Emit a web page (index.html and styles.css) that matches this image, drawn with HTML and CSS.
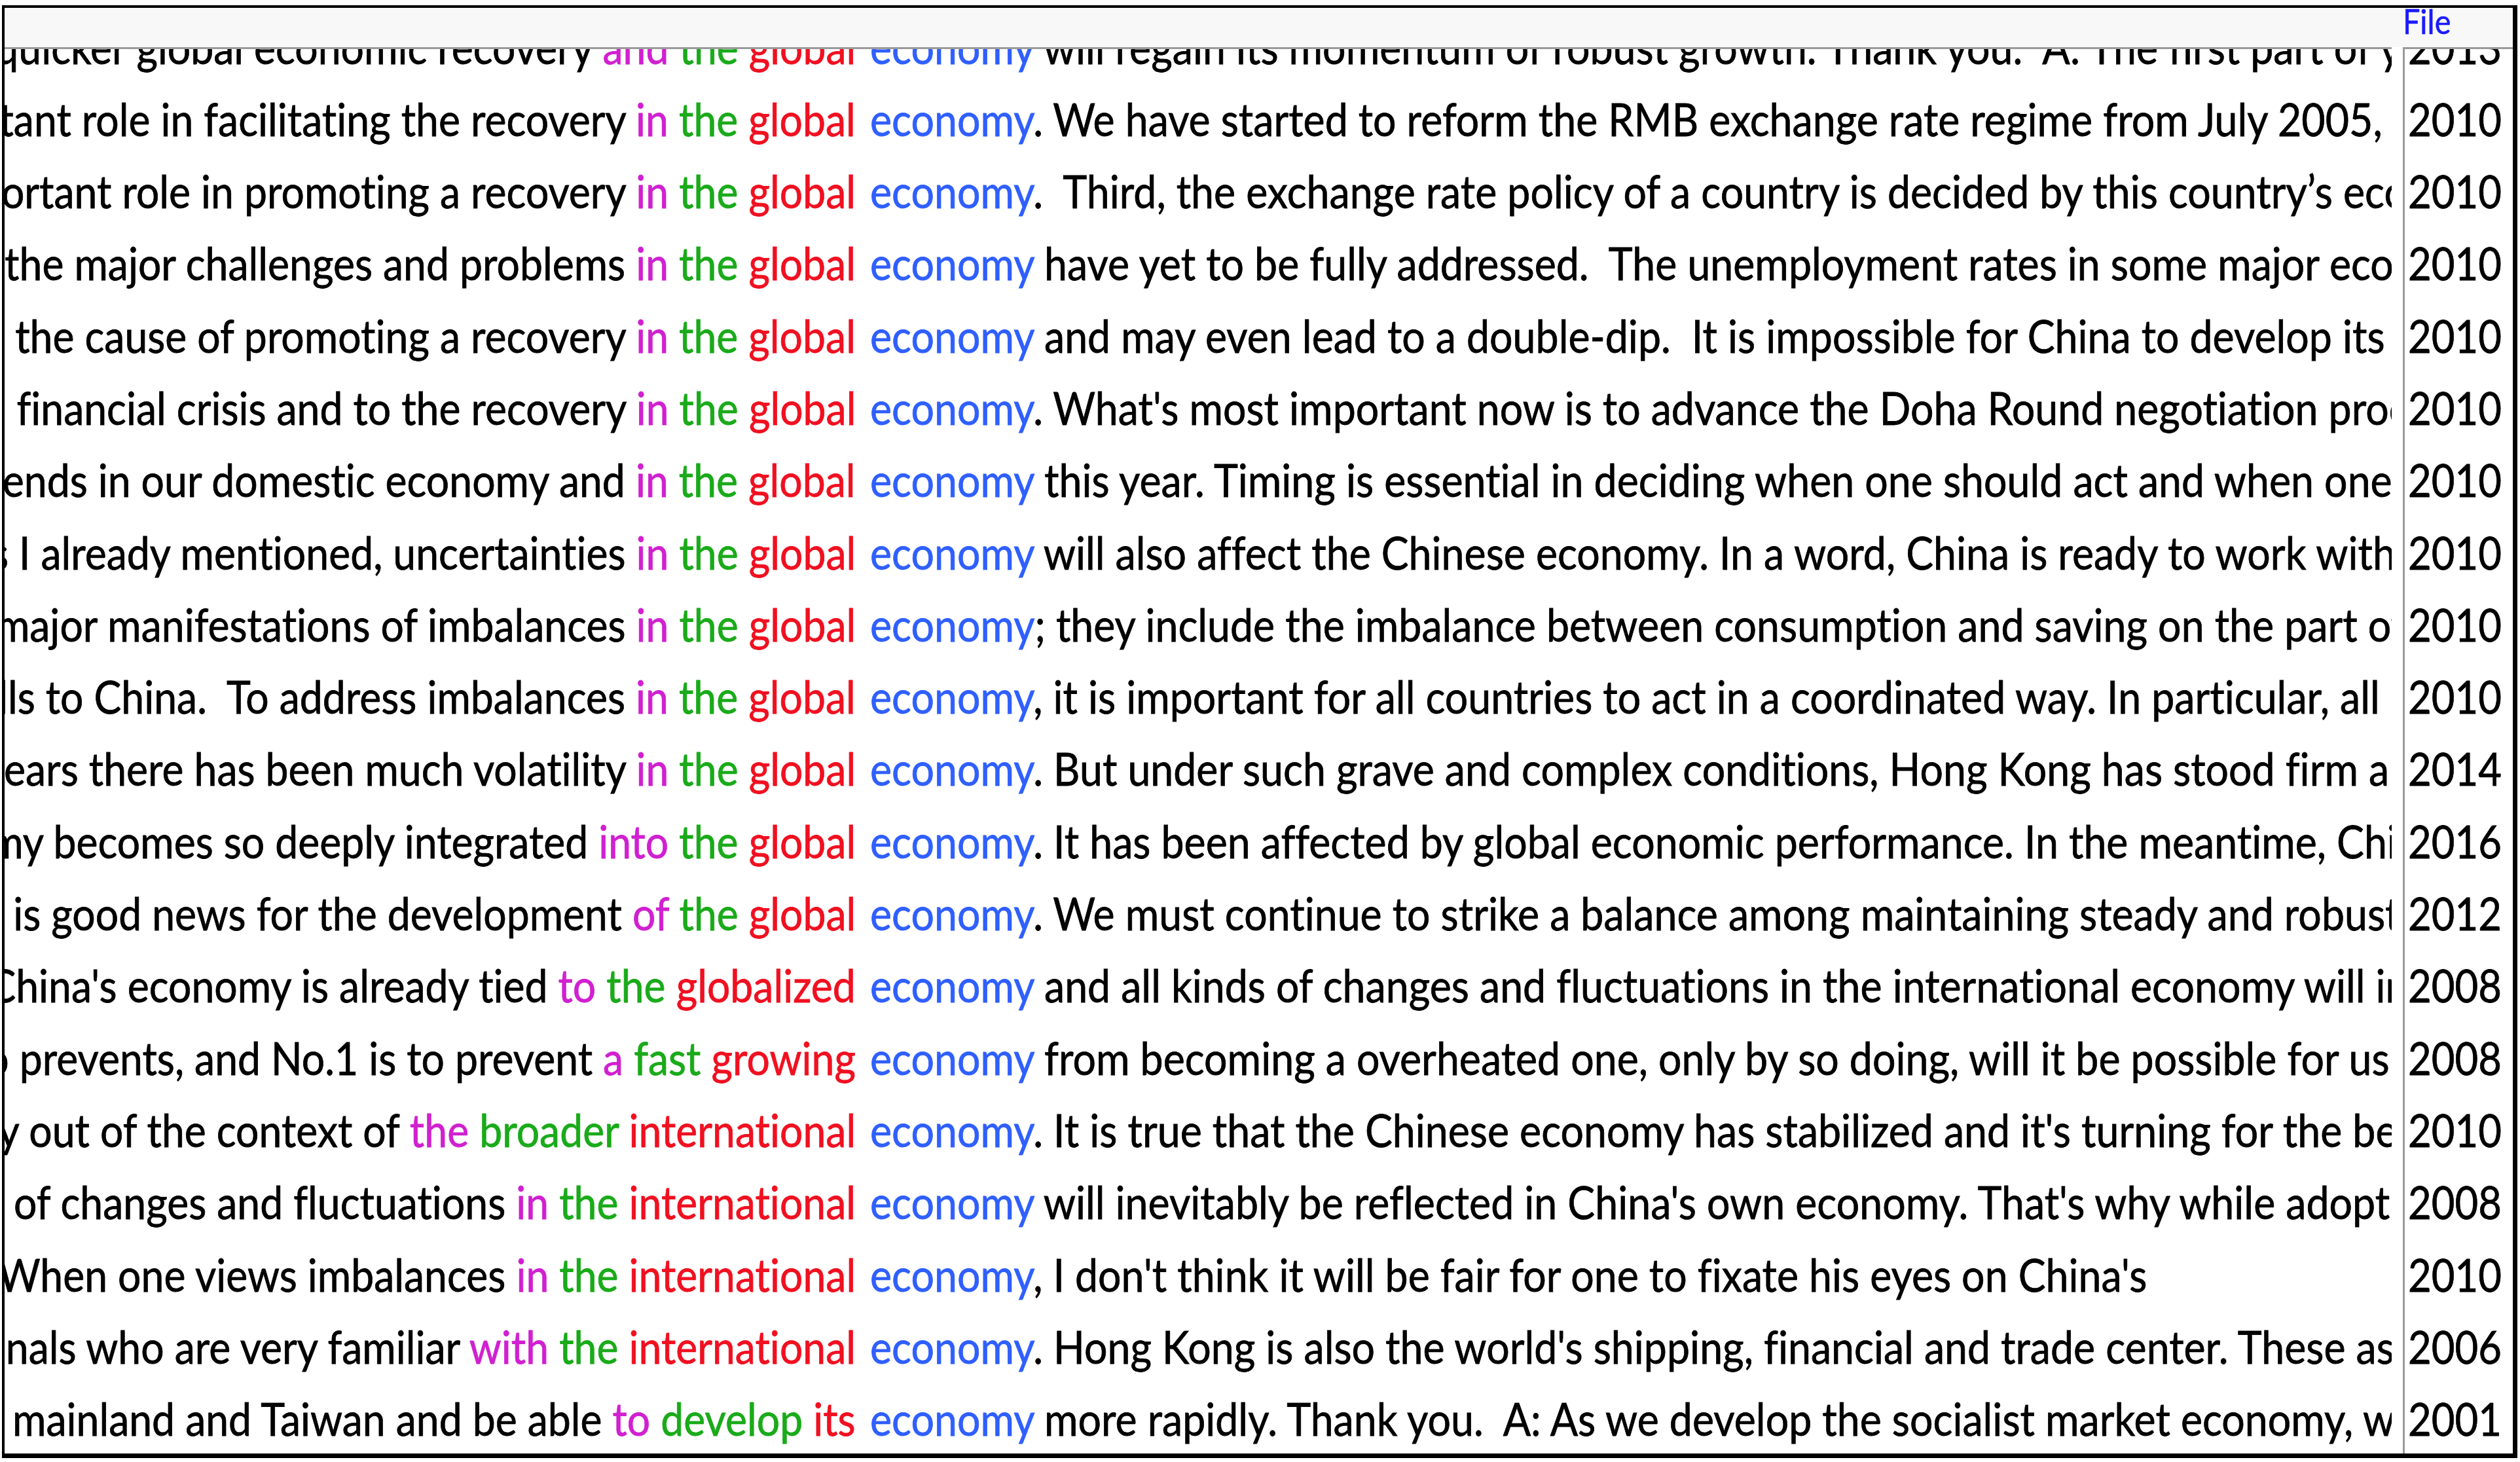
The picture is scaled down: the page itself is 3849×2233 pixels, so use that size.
FILE: index.html
```html
<!DOCTYPE html>
<html lang="en">
<head>
<meta charset="utf-8">
<title>Concordance</title>
<link rel="stylesheet" href="styles.css">
</head>
<body>
<div class="frame">
  <div class="header">
    <div class="h-conc"></div>
    <div class="h-gap"></div>
    <div class="h-file"><span class="t">File</span></div>
  </div>
  <div class="body">
    <div class="conc">
      <div class="list">
        <div class="row"><div class="lc"><span class="t">We look forward to working with all parties for a quicker global economic recovery <span class="m">and</span> <span class="g">the</span> <span class="r">global</span></span></div><div class="rc"><span class="t"><span class="kw">economy</span> will regain its momentum of robust growth. Thank you.  A: The first part of y</span></div></div>
        <div class="row"><div class="lc"><span class="t">China will continue to play an important role in facilitating the recovery <span class="m">in</span> <span class="g">the</span> <span class="r">global</span></span></div><div class="rc"><span class="t"><span class="kw">economy</span>. We have started to reform the RMB exchange rate regime from July 2005, an</span></div></div>
        <div class="row"><div class="lc"><span class="t">China will continue to play an important role in promoting a recovery <span class="m">in</span> <span class="g">the</span> <span class="r">global</span></span></div><div class="rc"><span class="t"><span class="kw">economy</span>.  Third, the exchange rate policy of a country is decided by this country’s econ</span></div></div>
        <div class="row"><div class="lc"><span class="t">We should also be aware that some of the major challenges and problems <span class="m">in</span> <span class="g">the</span> <span class="r">global</span></span></div><div class="rc"><span class="t"><span class="kw">economy</span> have yet to be fully addressed.  The unemployment rates in some major econ</span></div></div>
        <div class="row"><div class="lc"><span class="t">Protectionism would be harmful to the cause of promoting a recovery <span class="m">in</span> <span class="g">the</span> <span class="r">global</span></span></div><div class="rc"><span class="t"><span class="kw">economy</span> and may even lead to a double-dip.  It is impossible for China to develop its e</span></div></div>
        <div class="row"><div class="lc"><span class="t">We should work together to fight the international financial crisis and to the recovery <span class="m">in</span> <span class="g">the</span> <span class="r">global</span></span></div><div class="rc"><span class="t"><span class="kw">economy</span>. What's most important now is to advance the Doha Round negotiation proce</span></div></div>
        <div class="row"><div class="lc"><span class="t">We need to pay close attention to the new trends in our domestic economy and <span class="m">in</span> <span class="g">the</span> <span class="r">global</span></span></div><div class="rc"><span class="t"><span class="kw">economy</span> this year. Timing is essential in deciding when one should act and when one s</span></div></div>
        <div class="row"><div class="lc"><span class="t">economy is still facing difficulties. As I already mentioned, uncertainties <span class="m">in</span> <span class="g">the</span> <span class="r">global</span></span></div><div class="rc"><span class="t"><span class="kw">economy</span> will also affect the Chinese economy. In a word, China is ready to work with o</span></div></div>
        <div class="row"><div class="lc"><span class="t">I would like to point out that one of the major manifestations of imbalances <span class="m">in</span> <span class="g">the</span> <span class="r">global</span></span></div><div class="rc"><span class="t"><span class="kw">economy</span>; they include the imbalance between consumption and saving on the part of s</span></div></div>
        <div class="row"><div class="lc"><span class="t">It is not fair to shift all the blame and all the bills to China.  To address imbalances <span class="m">in</span> <span class="g">the</span> <span class="r">global</span></span></div><div class="rc"><span class="t"><span class="kw">economy</span>, it is important for all countries to act in a coordinated way. In particular, all co</span></div></div>
        <div class="row"><div class="lc"><span class="t">Over the past few years there has been much volatility <span class="m">in</span> <span class="g">the</span> <span class="r">global</span></span></div><div class="rc"><span class="t"><span class="kw">economy</span>. But under such grave and complex conditions, Hong Kong has stood firm an</span></div></div>
        <div class="row"><div class="lc"><span class="t">As the Chinese economy becomes so deeply integrated <span class="m">into</span> <span class="g">the</span> <span class="r">global</span></span></div><div class="rc"><span class="t"><span class="kw">economy</span>. It has been affected by global economic performance. In the meantime, Chin</span></div></div>
        <div class="row"><div class="lc"><span class="t">This is good news for China and it is good news for the development <span class="m">of</span> <span class="g">the</span> <span class="r">global</span></span></div><div class="rc"><span class="t"><span class="kw">economy</span>. We must continue to strike a balance among maintaining steady and robust</span></div></div>
        <div class="row"><div class="lc"><span class="t">We must be aware that China's economy is already tied <span class="m">to</span> <span class="g">the</span> <span class="r">globalized</span></span></div><div class="rc"><span class="t"><span class="kw">economy</span> and all kinds of changes and fluctuations in the international economy will in</span></div></div>
        <div class="row"><div class="lc"><span class="t">what the government needs to do is two prevents, and No.1 is to prevent <span class="m">a</span> <span class="g">fast</span> <span class="r">growing</span></span></div><div class="rc"><span class="t"><span class="kw">economy</span> from becoming a overheated one, only by so doing, will it be possible for us t</span></div></div>
        <div class="row"><div class="lc"><span class="t">China's economy cannot develop in a way out of the context of <span class="m">the</span> <span class="g">broader</span> <span class="r">international</span></span></div><div class="rc"><span class="t"><span class="kw">economy</span>. It is true that the Chinese economy has stabilized and it's turning for the bett</span></div></div>
        <div class="row"><div class="lc"><span class="t">China is not immune from all kinds of changes and fluctuations <span class="m">in</span> <span class="g">the</span> <span class="r">international</span></span></div><div class="rc"><span class="t"><span class="kw">economy</span> will inevitably be reflected in China's own economy. That's why while adoptin</span></div></div>
        <div class="row"><div class="lc"><span class="t">the world economy. When one views imbalances <span class="m">in</span> <span class="g">the</span> <span class="r">international</span></span></div><div class="rc"><span class="t"><span class="kw">economy</span>, I don't think it will be fair for one to fixate his eyes on China's</span></div></div>
        <div class="row"><div class="lc"><span class="t">Hong Kong has a large number of professionals who are very familiar <span class="m">with</span> <span class="g">the</span> <span class="r">international</span></span></div><div class="rc"><span class="t"><span class="kw">economy</span>. Hong Kong is also the world's shipping, financial and trade center. These ass</span></div></div>
        <div class="row"><div class="lc"><span class="t">to enhance the exchanges between the mainland and Taiwan and be able <span class="m">to</span> <span class="g">develop</span> <span class="r">its</span></span></div><div class="rc"><span class="t"><span class="kw">economy</span> more rapidly. Thank you.  A: As we develop the socialist market economy, we</span></div></div>
      </div>
    </div>
    <div class="gap"></div>
    <div class="files">
      <div class="list">
        <div class="yr"><span class="t">2013</span></div>
        <div class="yr"><span class="t">2010</span></div>
        <div class="yr"><span class="t">2010</span></div>
        <div class="yr"><span class="t">2010</span></div>
        <div class="yr"><span class="t">2010</span></div>
        <div class="yr"><span class="t">2010</span></div>
        <div class="yr"><span class="t">2010</span></div>
        <div class="yr"><span class="t">2010</span></div>
        <div class="yr"><span class="t">2010</span></div>
        <div class="yr"><span class="t">2010</span></div>
        <div class="yr"><span class="t">2014</span></div>
        <div class="yr"><span class="t">2016</span></div>
        <div class="yr"><span class="t">2012</span></div>
        <div class="yr"><span class="t">2008</span></div>
        <div class="yr"><span class="t">2008</span></div>
        <div class="yr"><span class="t">2010</span></div>
        <div class="yr"><span class="t">2008</span></div>
        <div class="yr"><span class="t">2010</span></div>
        <div class="yr"><span class="t">2006</span></div>
        <div class="yr"><span class="t">2001</span></div>
      </div>
    </div>
  </div>
</div>
</body>
</html>
```

FILE: styles.css
```css
* {
  box-sizing: border-box;
  margin: 0;
  padding: 0;
}

html, body {
  background: #ffffff;
}

body {
  font-family: Lato, "Open Sans", "DejaVu Sans", sans-serif;
  font-variant-ligatures: none;
  color: #000000;
  width: 3849px;
  height: 2233px;
  overflow: hidden;
}

.frame {
  margin: 8px 0 0 3px;
  width: 3842px;
  height: 2219px;
  border-style: solid;
  border-color: #000000;
  border-width: 4px 7px 7px 4px;
  display: flex;
  flex-direction: column;
  background: #ffffff;
  overflow: hidden;
}

.header {
  flex: none;
  height: 60px;
  background: #f8f8f8;
  display: grid;
  grid-template-columns: 3646px 17px minmax(0, 1fr);
}

.h-file {
  grid-column: 3;
  color: #1a1aff;
  font-size: 52px;
  line-height: 40px;
  white-space: pre;
  overflow: hidden;
  -webkit-text-stroke: 0.6px currentColor;
}

.h-file .t {
  display: inline-block;
  transform: scaleX(0.9);
  transform-origin: left center;
}

.body {
  flex: 1;
  min-height: 0;
  display: grid;
  grid-template-columns: 3646px 17px minmax(0, 1fr);
}

.conc {
  border-top: 3px solid #9a9a9a;
  overflow: hidden;
}

.gap {
  background: #ffffff;
}

.files {
  border-top: 3px solid #9a9a9a;
  border-left: 3px solid #9a9a9a;
  overflow: hidden;
}

.list {
  margin-top: -59.5px;
}

.row {
  display: grid;
  grid-template-columns: 1300px minmax(0, 1fr);
  column-gap: 22px;
  height: 110.3px;
  font-size: 70px;
  line-height: 110.3px;
  -webkit-text-stroke: 0.8px currentColor;
}

.lc {
  display: flex;
  justify-content: flex-end;
  overflow: hidden;
}

.rc {
  display: flex;
  justify-content: flex-start;
  overflow: hidden;
}

.t {
  flex: none;
  white-space: pre;
}

.lc .t {
  transform: scaleX(0.893);
  transform-origin: right center;
}

.rc .t {
  transform: scaleX(0.895);
  transform-origin: left center;
}

.yr {
  height: 110.3px;
  font-size: 70px;
  line-height: 110.3px;
  padding-left: 5px;
  white-space: pre;
  overflow: hidden;
  -webkit-text-stroke: 0.8px currentColor;
}

.yr .t {
  display: inline-block;
  transform: scaleX(0.88);
  transform-origin: left center;
}

.m { color: #d020d0; }
.g { color: #1aaa1a; }
.r { color: #f01020; }
.kw { color: #2f5fff; }
```
